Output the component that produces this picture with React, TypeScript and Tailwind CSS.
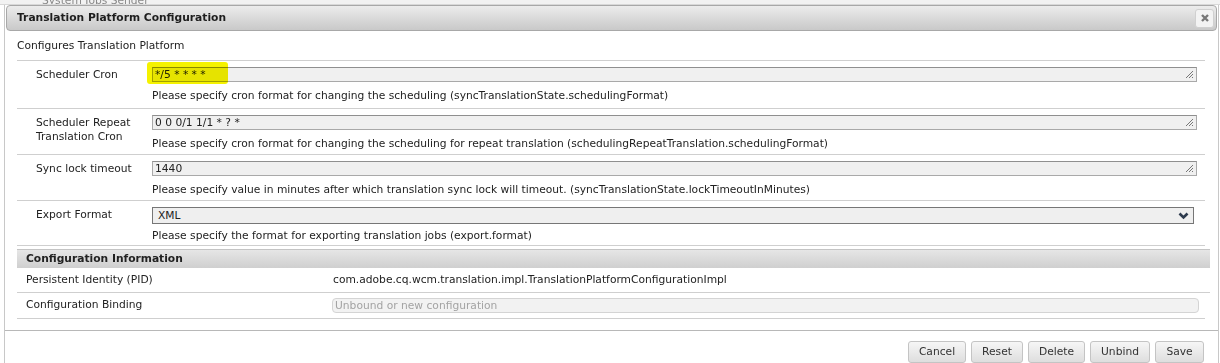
import React from "react";

const font = "font-['DejaVu_Sans',Verdana,sans-serif]";

type FieldRow = {
  label: string[];
  value: string;
  help: string;
  kind: "text" | "select";
  mark?: boolean;
};

const rows: FieldRow[] = [
  {
    label: ["Scheduler Cron"],
    value: "*/5 * * * *",
    help: "Please specify cron format for changing the scheduling (syncTranslationState.schedulingFormat)",
    kind: "text",
    mark: true,
  },
  {
    label: ["Scheduler Repeat", "Translation Cron"],
    value: "0 0 0/1 1/1 * ? *",
    help: "Please specify cron format for changing the scheduling for repeat translation (schedulingRepeatTranslation.schedulingFormat)",
    kind: "text",
  },
  {
    label: ["Sync lock timeout"],
    value: "1440",
    help: "Please specify value in minutes after which translation sync lock will timeout. (syncTranslationState.lockTimeoutInMinutes)",
    kind: "text",
  },
  {
    label: ["Export Format"],
    value: "XML",
    help: "Please specify the format for exporting translation jobs (export.format)",
    kind: "select",
  },
];

function Grip() {
  return (
    <svg width="9" height="9" viewBox="0 0 9 9" className="absolute right-[2px] bottom-[2px]">
      <path d="M1 8 L8 1 M4 8 L8 4 M7 8 L8 7" stroke="#777" strokeWidth="1" />
    </svg>
  );
}

function TextBox({ value, mark }: { value: string; mark?: boolean }) {
  return (
    <div className="relative w-[1045px]">
      {mark && (
        <span className="absolute -left-[5px] -top-[5px] w-[81px] h-[22px] rounded-[3px] bg-[#f5f200]" />
      )}
      <div className="relative h-[15px] border border-[#a9a9a9] border-t-[#8f8f8f] bg-[#efefef]/95 pl-[2px] leading-[13px] text-[#222] [mix-blend-mode:multiply]">
        {value}
        <Grip />
      </div>
    </div>
  );
}

function SelectBox({ value }: { value: string }) {
  return (
    <div className="relative h-[17px] w-[1042px] border border-[#767676] bg-[#efefef] pl-[5px] leading-[15px] text-[#222]">
      {value}
      <svg width="11" height="8" viewBox="0 0 11 8" className="absolute right-[4px] top-[4px]">
        <path d="M1.5 1.5 L5.5 5.5 L9.5 1.5" stroke="#2e3b4e" strokeWidth="2.6" fill="none" />
      </svg>
    </div>
  );
}

function Button({ label, w }: { label: string; w: string }) {
  return (
    <div
      className={`${w} h-[22px] flex items-center justify-center rounded-[3px] border border-[#c4c4c4] bg-gradient-to-b from-[#f6f6f6] to-[#dedede] text-[#333]`}
    >
      {label}
    </div>
  );
}

export default function App() {
  return (
    <div className={`${font} w-[1220px] h-[363px] overflow-hidden bg-white text-[10.7px] text-[#222]`}>
      {/* page behind the dialog */}
      <div className="h-[5px] overflow-hidden bg-[#f2f2f2] border-b border-[#d8d8d8]">
        <div className="-mt-[7px] pl-[42px] text-[#888]">System Jobs Sender</div>
      </div>

      <div className="ml-[4px] mr-[1px] h-[400px] border-l border-r border-[#c8c8c8] bg-white">
        {/* title bar */}
        <div className="mx-[1px] h-[26px] flex items-center justify-between rounded-[4px] border border-[#a8a8a8] bg-gradient-to-b from-[#ececec] to-[#c9c9c9] pl-[10px] pr-[2px]">
          <span className="font-bold text-[#1e1e1e]">Translation Platform Configuration</span>
          <div className="w-[19px] h-[19px] flex items-center justify-center rounded-[3px] border border-[#d0d0d0] bg-[#f3f3f3]">
            <svg width="10" height="10" viewBox="0 0 10 10">
              <path d="M2 2 L8 8 M8 2 L2 8" stroke="#777" strokeWidth="2.4" />
            </svg>
          </div>
        </div>

        <div className="pl-[12px] pt-[8px] pb-[8px] leading-[13px]">Configures Translation Platform</div>

        {/* properties */}
        <div className="ml-[12px] w-[1188px] border-t border-[#cfcfcf]">
          {rows.map((r) => (
            <div
              key={r.label[0]}
              className={`flex border-b border-[#cfcfcf] pt-[6px] ${r.mark ? "pb-[6px]" : r.kind === "select" ? "pb-[3px]" : "pb-[4px]"}`}
            >
              <div className="w-[135px] pl-[19px] pt-[1px] leading-[14px]">
                {r.label.map((l) => (
                  <div key={l}>{l}</div>
                ))}
              </div>
              <div className={`flex flex-col ${r.kind === "select" ? "gap-[5px]" : "gap-[7px]"}`}>
                {r.kind === "text" ? <TextBox value={r.value} mark={r.mark} /> : <SelectBox value={r.value} />}
                <div className="leading-[13px]">{r.help}</div>
              </div>
            </div>
          ))}
        </div>

        {/* configuration information */}
        <div className="ml-[12px] mt-[3px] w-[1193px]">
          <div className="h-[19px] flex items-center pl-[9px] border-t border-[#c4c4c4] bg-gradient-to-b from-[#e6e6e6] to-[#cfcfcf] font-bold">
            Configuration Information
          </div>
          <div className="flex items-center h-[25px] border-b border-[#cfcfcf] pl-[9px]">
            <div className="w-[307px]">Persistent Identity (PID)</div>
            <div>com.adobe.cq.wcm.translation.impl.TranslationPlatformConfigurationImpl</div>
          </div>
          <div className="flex items-center h-[26px] border-b border-[#cfcfcf] pl-[9px] w-[1188px]">
            <div className="w-[306px]">Configuration Binding</div>
            <div className="w-[867px] h-[15px] rounded-[4px] border border-[#d4d4d4] bg-[#f2f2f2] pl-[2px] leading-[13px] text-[#a3a3a3]">
              Unbound or new configuration
            </div>
          </div>
        </div>

        <div className="mt-[11px] border-t border-[#b8b8b8]" />

        <div className="flex justify-end gap-[5px] pt-[10px] pr-[14px]">
          <Button label="Cancel" w="w-[58px]" />
          <Button label="Reset" w="w-[52px]" />
          <Button label="Delete" w="w-[57px]" />
          <Button label="Unbind" w="w-[60px]" />
          <Button label="Save" w="w-[49px]" />
        </div>
      </div>
    </div>
  );
}
